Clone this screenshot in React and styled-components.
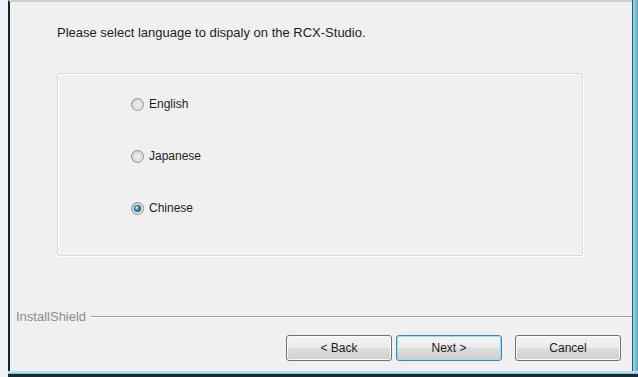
import React from 'react';
import styled, { createGlobalStyle } from 'styled-components';

const Global = createGlobalStyle`
  html, body { margin: 0; padding: 0; }
  body {
    width: 638px;
    height: 377px;
    overflow: hidden;
    background: #eef2f4;
    font-family: "Liberation Sans", Arial, sans-serif;
  }
`;

const Frame = styled.div`
  display: flex;
  flex-direction: column;
  width: 638px;
  height: 377px;
`;

const Body = styled.div`
  display: flex;
  flex: 1;
  padding-left: 8px;
`;

const Win = styled.div`
  flex: 1;
  display: flex;
  flex-direction: column;
  background: #f0f0f0;
  border-left: 2px solid #1b2328;
  border-top: 2px solid #c9cfd3;
`;

const RightEdge = styled.div`
  width: 6px;
  background: linear-gradient(to right, #2e5c70 0, #2e5c70 1px, #9fd2e4 1px, #7fbcd2 4px, #5f9fb7 6px);
`;

const BottomEdge = styled.div`
  height: 6px;
  margin-left: 8px;
  background: linear-gradient(to bottom, #b7e0ef 0, #b7e0ef 2px, #88c3da 2px, #88c3da 3px, #1d2b33 3px);
`;

const Content = styled.div`
  flex: 1;
  padding: 23px 0 0 47px;
`;

const Prompt = styled.div`
  font-size: 13px;
  color: #1e1e1e;
  line-height: 16px;
`;

const Group = styled.div`
  margin-top: 32px;
  width: 526px;
  height: 183px;
  border: 1px solid #dadada;
  box-shadow: inset 1px 1px 0 #ffffff, 1px 1px 0 #ffffff;
  border-radius: 3px;
  display: flex;
  flex-direction: column;
  gap: 36px;
  padding: 22px 0 0 73px;
  box-sizing: border-box;
`;

const Option = styled.label`
  display: flex;
  align-items: center;
  gap: 5px;
  height: 16px;
  font-size: 12px;
  color: #1e1e1e;
`;

const Footer = styled.div`
  display: flex;
  flex-direction: column;
  padding: 0 0 10px 6px;
`;

const Brand = styled.div`
  display: flex;
  align-items: center;
  gap: 5px;
  font-size: 13px;
  color: #8c8c8c;
  margin-top: -3px;
  &::after {
    content: '';
    flex: 1;
    height: 1px;
    background: #a0a0a0;
    box-shadow: 0 1px 0 #ffffff;
  }
`;

const Buttons = styled.div`
  display: flex;
  justify-content: flex-end;
  padding-right: 11px;
  margin-top: 11px;
`;

const Btn = styled.button`
  width: 106px;
  height: 26px;
  margin-left: ${p => p.$gap}px;
  font-family: "Liberation Sans", Arial, sans-serif;
  font-size: 12px;
  color: #1a1a1a;
  border-radius: 3px;
  border: 1px solid ${p => (p.$default ? '#3a84b4' : '#707070')};
  background: linear-gradient(to bottom, #f3f3f3 0%, #ebebeb 48%, #dddddd 50%, #cfcfcf 100%);
  box-shadow: inset 0 0 0 1px ${p => (p.$default ? '#9fdcf3' : '#fbfbfb')};
  padding: 0;
`;

const Radio = ({ checked }) => (
  <svg width="13" height="13" viewBox="0 0 13 13">
    <defs>
      <linearGradient id="rb" x1="0" y1="0" x2="1" y2="1">
        <stop offset="0" stopColor="#c9c9c9" />
        <stop offset="1" stopColor="#f4f4f4" />
      </linearGradient>
      <radialGradient id="rd" cx="0.4" cy="0.4" r="0.6">
        <stop offset="0" stopColor="#8ad4ee" />
        <stop offset="0.6" stopColor="#2d8db8" />
        <stop offset="1" stopColor="#1b5c80" />
      </radialGradient>
    </defs>
    <circle cx="6.5" cy="6.5" r="6" fill="url(#rb)" stroke="#8e8f8f" strokeWidth="1" />
    <circle cx="6.5" cy="6.5" r="4" fill="#e9e9e9" stroke="#d0d0d0" strokeWidth="0.6" />
    {checked && <circle cx="6.5" cy="6.5" r="3.3" fill="url(#rd)" stroke="#1f4e68" strokeWidth="0.6" />}
    {checked && <circle cx="5.6" cy="5.6" r="1" fill="#c8eefa" />}
  </svg>
);

const App = () => (
  <>
    <Global />
    <Frame>
      <Body>
        <Win>
          <Content>
            <Prompt>Please select language to dispaly on the RCX-Studio.</Prompt>
            <Group>
              <Option><Radio />English</Option>
              <Option><Radio />Japanese</Option>
              <Option><Radio checked />Chinese</Option>
            </Group>
          </Content>
          <Footer>
            <Brand>InstallShield</Brand>
            <Buttons>
              <Btn $gap={0}>&lt; Back</Btn>
              <Btn $gap={4} $default>Next &gt;</Btn>
              <Btn $gap={13}>Cancel</Btn>
            </Buttons>
          </Footer>
        </Win>
        <RightEdge />
      </Body>
      <BottomEdge />
    </Frame>
  </>
);

export default App;
